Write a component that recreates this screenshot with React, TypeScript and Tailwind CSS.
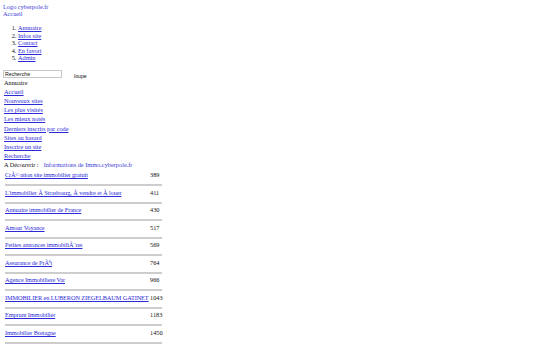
import React from "react";

const menu = [
  "Accueil",
  "Nouveaux sites",
  "Les plus visités",
  "Les mieux notés",
  "Derniers inscrits par code",
  "Sites au hasard",
  "Inscrire un site",
  "Recherche",
];

const rows: [string, string][] = [
  ["CrÃ©ation site immobilier gratuit", "389"],
  ["L'immobilier Ã  Strasbourg, Ã  vendre et Ã  louer", "411"],
  ["Annuaire immobilier de France", "430"],
  ["Amour Voyance", "517"],
  ["Petites annonces immobiliÃ¨res", "569"],
  ["Assurance de PrÃªt", "764"],
  ["Agence Immobiliere Var", "966"],
  ["IMMOBILIER en LUBERON ZIEGELBAUM GATINET", "1043"],
  ["Emprunt Immobilier", "1183"],
  ["Immobilier Bretagne", "1450"],
];

export default function App() {
  return (
    <div
      className="w-[550px] h-[344px] overflow-hidden bg-white text-[#111] text-[6.3px] leading-[7.4px]"
      style={{ fontFamily: '"Liberation Serif", "Times New Roman", serif' }}
    >
      <div className="pl-[3px] pt-[3px]">
        <div className="text-[#3b3bd6]">Logo cyberpole.fr</div>
        <div className="text-[#3b3bd6]">Accueil</div>
      </div>
      <ol className="list-decimal pl-[18px] mt-[6.4px] mb-[7px]">
        {["Annuaire", "Infos site", "Contact", "En favori", "Admin"].map((t) => (
          <li key={t} className="h-[7.5px]">
            <a className="text-[#2a2ad8] underline">{t}</a>
          </li>
        ))}
      </ol>
      <div className="flex items-end pl-[3px] h-[9px]">
        <div
          className="w-[59px] h-[8px] border border-[#c8c8c8] text-[5.2px] leading-[6px] pl-[1px] flex items-center"
          style={{ fontFamily: '"Liberation Sans", Arial, sans-serif' }}
        >
          Recherche
        </div>
        <div
          className="ml-[12px] text-[5.2px] leading-[6px] mb-[-1px]"
          style={{ fontFamily: '"Liberation Sans", Arial, sans-serif' }}
        >
          loupe
        </div>
      </div>
      <div className="pl-[4px]">
        <div className="h-[9.2px] flex items-center">Annuaire</div>
        {menu.map((m) => (
          <div key={m} className="h-[9.2px] flex items-center">
            <a className="text-[#2a2ad8] underline">{m}</a>
          </div>
        ))}
        <div className="h-[9.2px] flex items-center">
          <span>A Découvrir :</span>
          <span className="ml-[5px] text-[#3b3bd6]">Informations de Immo.cyberpole.fr</span>
        </div>
      </div>
      <div className="pl-[5px] w-[162px]">
        {rows.map(([t, n]) => (
          <div key={n} className="h-[17.5px] flex flex-col">
            <div className="h-[11px] flex items-center justify-between">
              <a className="text-[#2a2ad8] underline whitespace-nowrap tracking-[-0.1px]">{t}</a>
              <span className="w-[12px] shrink-0">{n}</span>
            </div>
            <div className="h-[3.5px]" />
            <div className="h-[2px] bg-[#cdcdcd]" />
          </div>
        ))}
      </div>
    </div>
  );
}
